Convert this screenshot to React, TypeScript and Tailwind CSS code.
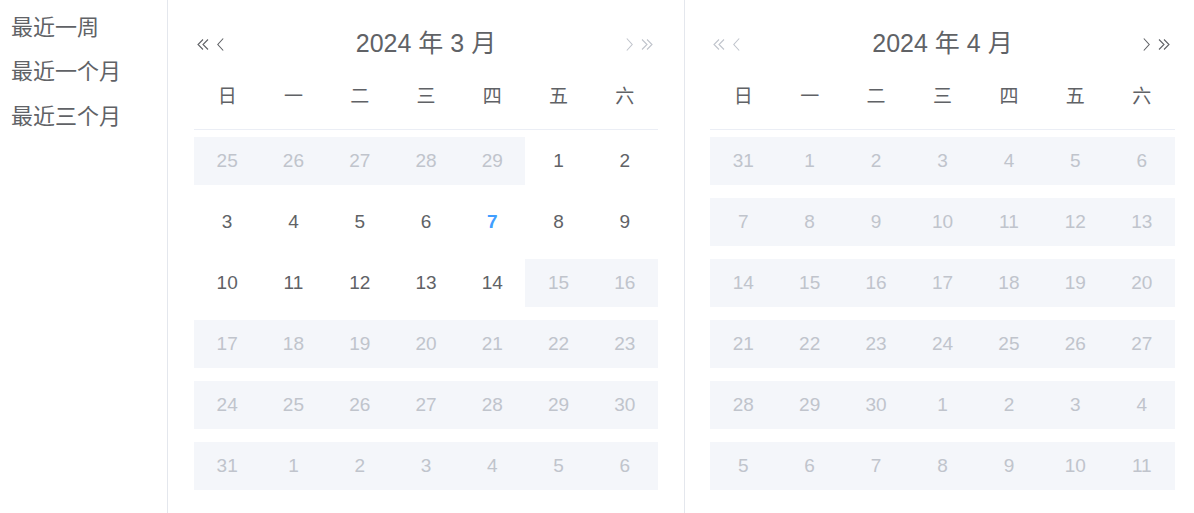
import React from "react";

type Day = { d: number; muted: boolean; band: boolean; today?: boolean };

const SHORTCUTS = ["最近一周", "最近一个月", "最近三个月"];
const WEEK = ["日", "一", "二", "三", "四", "五", "六"];

const FONT = { fontFamily: '"Liberation Sans", Arial, "Noto Sans CJK SC", sans-serif' };

function buildMarch(): Day[] {
  const days: Day[] = [];
  for (let d = 25; d <= 29; d++) days.push({ d, muted: true, band: true });
  for (let d = 1; d <= 31; d++) {
    const off = d >= 15;
    days.push({ d, muted: off, band: off, today: d === 7 });
  }
  for (let d = 1; d <= 6; d++) days.push({ d, muted: true, band: true });
  return days;
}

function buildApril(): Day[] {
  const days: Day[] = [{ d: 31, muted: true, band: true }];
  for (let d = 1; d <= 30; d++) days.push({ d, muted: true, band: true });
  for (let d = 1; d <= 11; d++) days.push({ d, muted: true, band: true });
  return days;
}

function DoubleLeft() {
  return (
    <svg width="12" height="11" viewBox="0 0 12 11" fill="none" stroke="currentColor" strokeWidth="1.1">
      <polyline points="6,0.5 1,5.5 6,10.5" />
      <polyline points="11,0.5 6,5.5 11,10.5" />
    </svg>
  );
}

function SingleLeft() {
  return (
    <svg width="7" height="13" viewBox="0 0 7 13" fill="none" stroke="currentColor" strokeWidth="1.1">
      <polyline points="6.2,0.5 0.8,6.5 6.2,12.5" />
    </svg>
  );
}

function DoubleRight() {
  return (
    <svg width="12" height="11" viewBox="0 0 12 11" fill="none" stroke="currentColor" strokeWidth="1.1">
      <polyline points="1,0.5 6,5.5 1,10.5" />
      <polyline points="6,0.5 11,5.5 6,10.5" />
    </svg>
  );
}

function SingleRight() {
  return (
    <svg width="7" height="13" viewBox="0 0 7 13" fill="none" stroke="currentColor" strokeWidth="1.1">
      <polyline points="0.8,0.5 6.2,6.5 0.8,12.5" />
    </svg>
  );
}

function MonthPanel({
  title,
  days,
  leftActive,
  className,
}: {
  title: string;
  days: Day[];
  leftActive: boolean;
  className: string;
}) {
  return (
    <div className={className}>
      <div className="mt-[22px] grid h-[44px] grid-cols-[60px_1fr_60px] items-center">
        <div className={`flex items-center gap-[8px] pl-[3px] ${leftActive ? "text-[#606266]" : "text-[#c0c4cc]"}`}>
          <DoubleLeft />
          <SingleLeft />
        </div>
        <div className="text-center text-[25px] text-[#606266]">{title}</div>
        <div className={`flex items-center justify-end gap-[8px] pr-[5px] ${leftActive ? "text-[#c0c4cc]" : "text-[#606266]"}`}>
          <SingleRight />
          <DoubleRight />
        </div>
      </div>
      <div className="grid h-[64px] grid-cols-7 items-center border-b border-[#ebeef5] text-[19px] text-[#606266]">
        {WEEK.map((w) => (
          <div key={w} className="text-center">{w}</div>
        ))}
      </div>
      <div className="grid grid-cols-7">
        {days.map((day, i) => (
          <div key={i} className="h-[61px] pt-[7px]">
            <div
              className={`flex h-[48px] items-center justify-center text-[19px] ${day.band ? "bg-[#f4f6fa]" : ""} ${
                day.today ? "font-bold text-[#409eff]" : day.muted ? "text-[#c0c4cc]" : "text-[#606266]"
              }`}
            >
              {day.d}
            </div>
          </div>
        ))}
      </div>
    </div>
  );
}

export default function App() {
  return (
    <div className="flex h-[513px] w-[1194px] overflow-hidden bg-white" style={FONT}>
      <div className="w-[168px] shrink-0 border-r border-[#e4e7ed] pt-[5px]">
        {SHORTCUTS.map((s) => (
          <div key={s} className="flex h-[44.5px] items-center pl-[11px] text-[22px] text-[#606266]">
            {s}
          </div>
        ))}
      </div>
      <MonthPanel
        title="2024 年 3 月"
        days={buildMarch()}
        leftActive
        className="w-[517px] shrink-0 border-r border-[#e4e7ed] px-[26px]"
      />
      <MonthPanel
        title="2024 年 4 月"
        days={buildApril()}
        leftActive={false}
        className="w-[490px] shrink-0 pl-[25px] pr-[0px]"
      />
    </div>
  );
}
